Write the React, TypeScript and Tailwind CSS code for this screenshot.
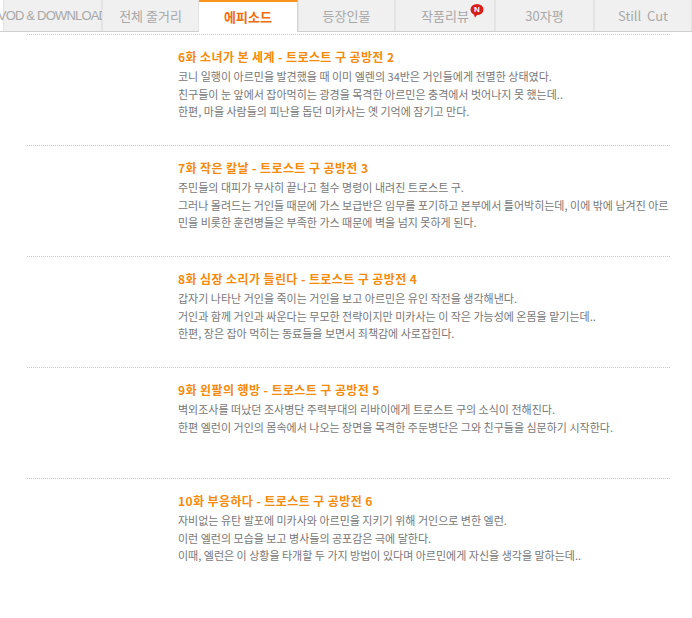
const TABS = [
  { label: "VOD & DOWNLOAD", w: "w-[99px]", cls: "text-[12px] tracking-[-0.8px] font-['Liberation_Sans',sans-serif]" },
  { label: "전체 줄거리", w: "w-[97px]", cls: "" },
  { label: "에피소드", w: "w-[99px]", cls: "", active: true },
  { label: "등장인물", w: "w-[97px]", cls: "" },
  { label: "작품리뷰", w: "w-[100px]", cls: "", badge: true },
  { label: "30자평", w: "w-[99px]", cls: "" },
  { label: "Still  Cut", w: "w-[98px]", cls: "" },
];

const EPISODES = [
  {
    title: "6화 소녀가 본 세계 - 트로스트 구 공방전 2",
    lines: [
      "코니 일행이 아르민을 발견했을 때 이미 엘렌의 34반은 거인들에게 전멸한 상태였다.",
      "친구들이 눈 앞에서 잡아먹히는 광경을 목격한 아르민은 충격에서 벗어나지 못 했는데..",
      "한편, 마을 사람들의 피난을 돕던 미카사는 옛 기억에 잠기고 만다.",
    ],
  },
  {
    title: "7화 작은 칼날 - 트로스트 구 공방전 3",
    lines: [
      "주민들의 대피가 무사히 끝나고 철수 명령이 내려진 트로스트 구.",
      "그러나 몰려드는 거인들 때문에 가스 보급반은 임무를 포기하고 본부에서 틀어박히는데, 이에 밖에 남겨진 아르",
      "민을 비롯한 훈련병들은 부족한 가스 때문에 벽을 넘지 못하게 된다.",
    ],
  },
  {
    title: "8화 심장 소리가 들린다 - 트로스트 구 공방전 4",
    lines: [
      "갑자기 나타난 거인을 죽이는 거인을 보고 아르민은 유인 작전을 생각해낸다.",
      "거인과 함께 거인과 싸운다는 무모한 전략이지만 미카사는 이 작은 가능성에 온몸을 맡기는데..",
      "한편, 장은 잡아 먹히는 동료들을 보면서 죄책감에 사로잡힌다.",
    ],
  },
  {
    title: "9화 왼팔의 행방 - 트로스트 구 공방전 5",
    lines: [
      "벽외조사를 떠났던 조사병단 주력부대의 리바이에게 트로스트 구의 소식이 전해진다.",
      "한편 엘런이 거인의 몸속에서 나오는 장면을 목격한 주둔병단은 그와 친구들을 심문하기 시작한다.",
    ],
  },
  {
    title: "10화 부응하다 - 트로스트 구 공방전 6",
    lines: [
      "자비없는 유탄 발포에 미카사와 아르민을 지키기 위해 거인으로 변한 엘런.",
      "이런 엘런의 모습을 보고 병사들의 공포감은 극에 달한다.",
      "이때, 엘런은 이 상황을 타개할 두 가지 방법이 있다며 아르민에게 자신을 생각을 말하는데..",
    ],
  },
];

export default function App() {
  return (
    <div className="w-[692px] h-[618px] bg-white overflow-hidden font-['Noto_Sans_CJK_KR','Liberation_Sans',sans-serif]">
      {/* tab bar */}
      <div className="flex h-[32px] pl-[3px] border-b border-[#cfcfcf]">
        {TABS.map((t) =>
          t.active ? (
            <div key={t.label} className={`${t.w} h-[32px] bg-white border-t-2 border-[#f7941d] border-r border-r-[#d5d5d5] flex items-center justify-center text-[13px] font-bold text-[#f26c0d]`}>
              {t.label}
            </div>
          ) : (
            <div key={t.label} className={`${t.w} relative h-[31px] bg-[#f0f0f0] border-l border-r border-[#e4e4e4] flex items-center justify-center whitespace-pre text-[13px] text-[#a8a8a8] ${t.cls}`}>
              {t.label}
              {t.badge && (
                <span className="absolute left-[74px] top-[4px] w-[14px] h-[14px] flex items-start justify-center">
                  <svg className="absolute inset-0" width="14" height="14" viewBox="0 0 14 14">
                    <ellipse cx="7" cy="5.5" rx="6.5" ry="5.5" fill="#d8201a" />
                    <path d="M3.5 9.5 L5 13.5 L7.5 10.5 Z" fill="#d8201a" />
                  </svg>
                  <span className="relative text-white text-[8px] leading-[11px] font-bold font-['Liberation_Sans',sans-serif]">N</span>
                </span>
              )}
            </div>
          ),
        )}
      </div>

      {/* episode list */}
      <div className="ml-[27px] w-[643px] mt-[2px]">
        {EPISODES.map((ep) => (
          <div key={ep.title} className="h-[111px] border-t border-dotted border-[#c8c8c8] pl-[151px] pt-[14px]">
            <div className="text-[12px] leading-[16px] font-bold text-[#f58a0b] whitespace-nowrap tracking-[0.4px]">{ep.title}</div>
            <div className="mt-[3px] text-[11px] leading-[17.5px] text-[#777777] whitespace-nowrap">
              {ep.lines.map((l) => (
                <div key={l}>{l}</div>
              ))}
            </div>
          </div>
        ))}
      </div>
    </div>
  );
}
